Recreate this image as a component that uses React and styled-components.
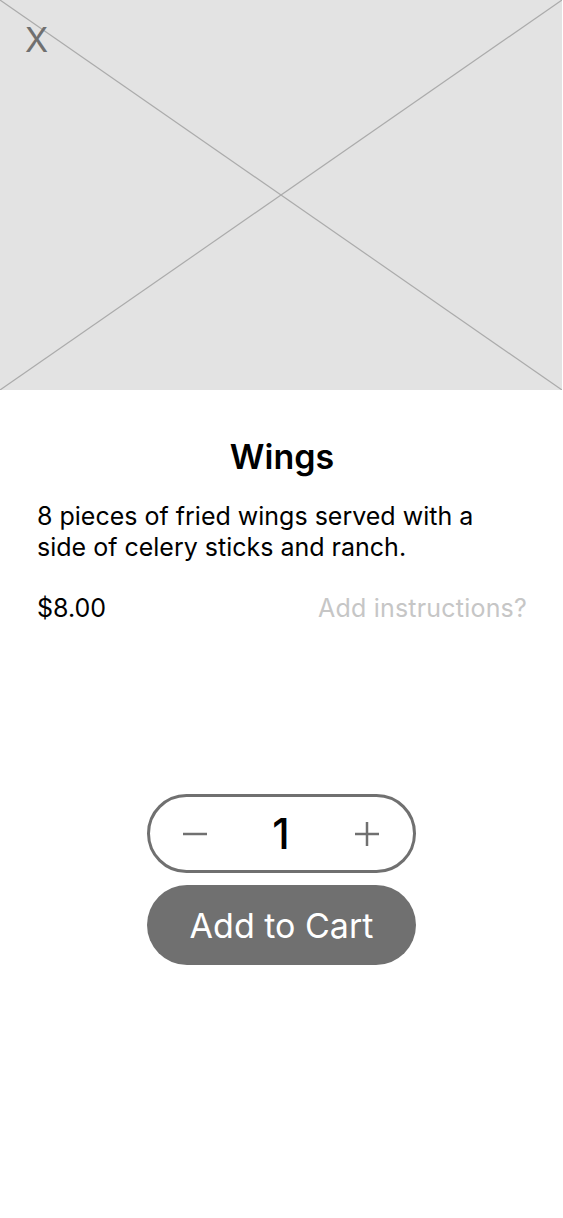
import styled, { createGlobalStyle } from 'styled-components';

const GlobalStyle = createGlobalStyle`
  body {
    margin: 0;
    background: #fff;
    font-family: Inter, "Noto Sans", sans-serif;
  }
`;

const Page = styled.div`
  width: 563px;
  min-height: 1218px;
  display: flex;
  flex-direction: column;
`;

const Hero = styled.div`
  position: relative;
  width: 562px;
  height: 390px;
  background: #e3e3e3;
`;

const Cross = styled.svg`
  display: block;
  width: 100%;
  height: 100%;
`;

const CloseBtn = styled.button`
  position: absolute;
  top: 23px;
  left: 25px;
  border: none;
  background: none;
  padding: 0;
  font-family: Inter, sans-serif;
  font-size: 34px;
  font-weight: 400;
  color: #707070;
  line-height: 1;
  cursor: pointer;
`;

const Body = styled.div`
  padding: 45px 36px 0 37px;
  display: flex;
  flex-direction: column;
`;

const Title = styled.h1`
  margin: 0;
  text-align: center;
  font-size: 34px;
  font-weight: 600;
  color: #000;
  line-height: 44px;
`;

const Desc = styled.p`
  margin: 22px 0 0;
  max-width: 470px;
  font-size: 25px;
  line-height: 31px;
  color: #000;
`;

const Row = styled.div`
  margin-top: 30px;
  display: flex;
  justify-content: space-between;
  align-items: center;
  font-size: 25px;
  line-height: 31px;
`;

const Price = styled.span`
  color: #000;
`;

const Instructions = styled.span`
  color: #c6c6c6;
  font-weight: 400;
  letter-spacing: 0.2px;
`;

const Actions = styled.div`
  margin-top: 170px;
  display: flex;
  flex-direction: column;
  align-items: center;
  gap: 12px;
`;

const Stepper = styled.div`
  width: 269px;
  height: 79px;
  box-sizing: border-box;
  border: 3px solid #707070;
  border-radius: 40px;
  display: flex;
  align-items: center;
  justify-content: space-between;
  padding: 0 24px 0 23px;
`;

const StepBtn = styled.button`
  border: none;
  background: none;
  padding: 0;
  width: 44px;
  height: 44px;
  display: flex;
  align-items: center;
  justify-content: center;
  cursor: pointer;
`;

const Count = styled.span`
  font-size: 42px;
  font-weight: 500;
  color: #000;
`;

const CartBtn = styled.button`
  width: 269px;
  height: 80px;
  border: none;
  border-radius: 40px;
  background: #707070;
  color: #fff;
  font-family: Inter, sans-serif;
  font-size: 34px;
  font-weight: 400;
  cursor: pointer;
`;

export default function App() {
  return (
    <>
      <GlobalStyle />
      <Page>
        <Hero>
          <Cross viewBox="0 0 562 390" preserveAspectRatio="none">
            <line x1="0" y1="0" x2="562" y2="390" stroke="#ababab" strokeWidth="1.2" />
            <line x1="562" y1="0" x2="0" y2="390" stroke="#ababab" strokeWidth="1.2" />
          </Cross>
          <CloseBtn>X</CloseBtn>
        </Hero>
        <Body>
          <Title>Wings</Title>
          <Desc>8 pieces of fried wings served with a side of celery sticks and ranch.</Desc>
          <Row>
            <Price>$8.00</Price>
            <Instructions>Add instructions?</Instructions>
          </Row>
        </Body>
        <Actions>
          <Stepper>
            <StepBtn aria-label="decrease">
              <svg width="26" height="26" viewBox="0 0 26 26">
                <line x1="1" y1="13" x2="25" y2="13" stroke="#707070" strokeWidth="2.5" />
              </svg>
            </StepBtn>
            <Count>1</Count>
            <StepBtn aria-label="increase">
              <svg width="26" height="26" viewBox="0 0 26 26">
                <line x1="1" y1="13" x2="25" y2="13" stroke="#707070" strokeWidth="2.5" />
                <line x1="13" y1="1" x2="13" y2="25" stroke="#707070" strokeWidth="2.5" />
              </svg>
            </StepBtn>
          </Stepper>
          <CartBtn>Add to Cart</CartBtn>
        </Actions>
      </Page>
    </>
  );
}
